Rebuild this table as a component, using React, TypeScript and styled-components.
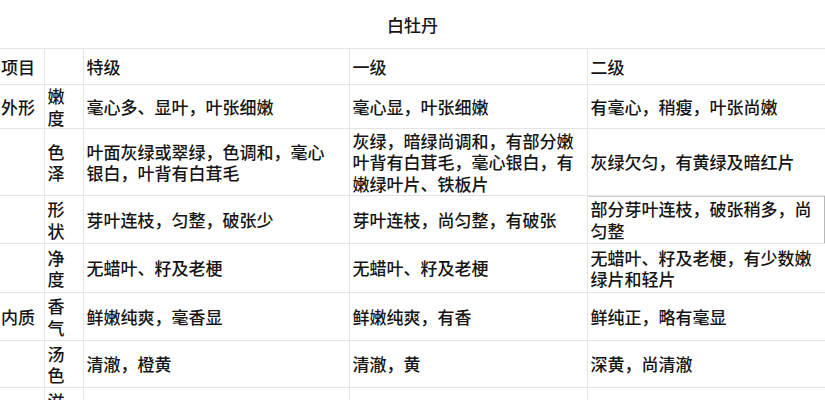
import React from "react";
import styled, { createGlobalStyle } from "styled-components";

const GlobalStyle = createGlobalStyle`
  html, body {
    margin: 0;
    padding: 0;
    background: #ffffff;
  }
  body {
    font-family: "Noto Sans CJK SC", "Noto Sans", sans-serif;
    color: #151515;
    overflow: hidden;
  }
`;

const Sheet = styled.div`
  width: 825px;
  height: 400px;
  overflow: hidden;
  background: #fff;
`;

const Title = styled.div`
  height: 48px;
  display: flex;
  align-items: center;
  justify-content: center;
  font-size: 17px;
  font-weight: 500;
  line-height: 21px;
  box-sizing: border-box;
`;

const Table = styled.table`
  border-collapse: collapse;
  table-layout: fixed;
  width: 826px;
  font-size: 17px;
  font-weight: 500;
  line-height: 21.5px;
`;

const Col = styled.col<{ $w: number }>`
  width: ${(p) => p.$w}px;
`;

const Row = styled.tr<{ $h: number }>`
  height: ${(p) => p.$h}px;
`;

const Cell = styled.td<{ $first?: boolean; $mark?: boolean }>`
  border: 1px solid #e4e4e4;
  border-left: ${(p) => (p.$first ? "none" : "1px solid #e4e4e4")};
  padding: 0 8px 0 3px;
  padding-left: ${(p) => (p.$first ? "1px" : "3px")};
  vertical-align: middle;
  word-break: break-all;
  white-space: normal;
  box-shadow: ${(p) => (p.$mark ? "inset -2px 0 0 #b8b8b8, inset 0 1px 0 #cfcfcf" : "none")};
`;

const SubCell = styled(Cell)`
  padding: 0 2px 0 3px;
`;

type RowData = {
  h: number;
  group: string;
  item: string;
  a: string;
  b: string;
  c: string;
  mark?: boolean;
};

const rows: RowData[] = [
  { h: 44, group: "外形", item: "嫩度", a: "毫心多、显叶，叶张细嫩", b: "毫心显，叶张细嫩", c: "有毫心，稍瘦，叶张尚嫩" },
  {
    h: 67,
    group: "",
    item: "色泽",
    a: "叶面灰绿或翠绿，色调和，毫心银白，叶背有白茸毛",
    b: "灰绿，暗绿尚调和，有部分嫩叶背有白茸毛，毫心银白，有嫩绿叶片、铁板片",
    c: "灰绿欠匀，有黄绿及暗红片",
  },
  { h: 48, group: "", item: "形状", a: "芽叶连枝，匀整，破张少", b: "芽叶连枝，尚匀整，有破张", c: "部分芽叶连枝，破张稍多，尚匀整", mark: true },
  { h: 49, group: "", item: "净度", a: "无蜡叶、籽及老梗", b: "无蜡叶、籽及老梗", c: "无蜡叶、籽及老梗，有少数嫩绿片和轻片" },
  { h: 48, group: "内质", item: "香气", a: "鲜嫩纯爽，毫香显", b: "鲜嫩纯爽，有香", c: "鲜纯正，略有毫显" },
  { h: 47, group: "", item: "汤色", a: "清澈，橙黄", b: "清澈，黄", c: "深黄，尚清澈" },
  { h: 48, group: "", item: "滋味", a: "", b: "", c: "" },
];

export default function App() {
  return (
    <>
      <GlobalStyle />
      <Sheet>
        <Title>白牡丹</Title>
        <Table>
          <colgroup>
            <Col $w={44} />
            <Col $w={39} />
            <Col $w={266} />
            <Col $w={238} />
            <Col $w={239} />
          </colgroup>
          <tbody>
            <Row $h={36}>
              <Cell $first>项目</Cell>
              <SubCell></SubCell>
              <Cell>特级</Cell>
              <Cell>一级</Cell>
              <Cell>二级</Cell>
            </Row>
            {rows.map((r) => (
              <Row key={r.item} $h={r.h}>
                <Cell $first>{r.group}</Cell>
                <SubCell>{r.item}</SubCell>
                <Cell>{r.a}</Cell>
                <Cell>{r.b}</Cell>
                <Cell $mark={r.mark}>{r.c}</Cell>
              </Row>
            ))}
          </tbody>
        </Table>
      </Sheet>
    </>
  );
}
